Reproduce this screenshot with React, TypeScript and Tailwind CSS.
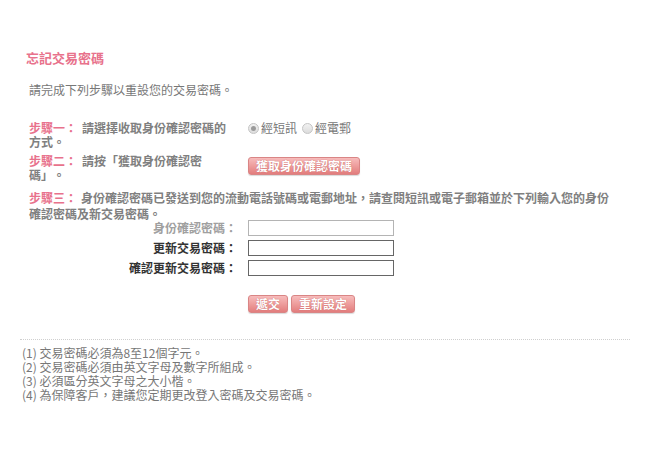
import type { ReactNode } from "react";

function Radio({ checked, label }: { checked?: boolean; label: string }) {
  return (
    <span className="flex items-center">
      <span className="flex h-[11px] w-[11px] items-center justify-center rounded-full border border-[#c4c4c4] bg-linear-to-b from-[#f2f2f2] to-[#dcdcdc]">
        {checked && <span className="h-[5px] w-[5px] rounded-full bg-[#9a9a9a]" />}
      </span>
      <span className="ml-[2px] text-[12px] leading-[14px] text-[#777]">{label}</span>
    </span>
  );
}

function PinkButton({ children }: { children: ReactNode }) {
  return (
    <button
      type="button"
      className="h-[18px] rounded-[3px] border border-[#d98585] bg-linear-to-b from-[#f7bcbc] to-[#e27d7d] px-[7px] text-[12px] font-bold leading-[16px] text-white shadow-[0_1px_1px_rgba(0,0,0,0.15)] [text-shadow:0_0_1px_#b9575a]"
    >
      {children}
    </button>
  );
}

const notes = [
  "(1) 交易密碼必須為8至12個字元。",
  "(2) 交易密碼必須由英文字母及數字所組成。",
  "(3) 必須區分英文字母之大小楷。",
  "(4) 為保障客戶，建議您定期更改登入密碼及交易密碼。",
];

export default function App() {
  return (
    <div
      lang="zh-Hant"
      className="min-h-[462px] w-[650px] bg-white pt-[50px] font-['Noto_Sans_CJK_TC',sans-serif] [text-spacing-trim:space-all]"
    >
      <div className="pl-[26px]">
        <h1 className="h-[16px] text-[13px] font-bold leading-[16px] text-[#e8728c]">忘記交易密碼</h1>

        <div className="pl-[3px]">
          <p className="mt-[17px] h-[14px] text-[12px] leading-[14px] text-[#777]">
            請完成下列步驟以重設您的交易密碼。
          </p>

          {/* step one */}
          <div className="mt-[24px] flex h-[28px]">
            <p className="w-[204px] text-[12px] font-bold leading-[14px] text-[#808080]">
              <span className="text-[#e8728c]">步驟一：</span>
              <span className="ml-[5px]">請選擇收取身份確認密碼的方式。</span>
            </p>
            <div className="ml-[15px] flex h-[14px] items-center gap-[5px]">
              <Radio checked label="經短訊" />
              <Radio label="經電郵" />
            </div>
          </div>

          {/* step two */}
          <div className="mt-[5px] flex h-[28px]">
            <p className="w-[204px] text-[12px] font-bold leading-[14px] text-[#808080]">
              <span className="text-[#e8728c]">步驟二：</span>
              <span className="ml-[5px]">請按「獲取身份確認密碼」。</span>
            </p>
            <div className="ml-[15px] mt-[-2px]">
              <PinkButton>獲取身份確認密碼</PinkButton>
            </div>
          </div>

          {/* step three */}
          <p className="mt-[8px] h-[32px] w-[586px] text-[12px] font-bold leading-[16px] text-[#808080]">
            <span className="text-[#e8728c]">步驟三：</span>
            <span className="ml-[4px]">
              身份確認密碼已發送到您的流動電話號碼或電郵地址，請查閱短訊或電子郵箱並於下列輸入您的身份確認密碼及新交易密碼。
            </span>
          </p>

          <div className="mt-[-2px] flex flex-col gap-[4px]">
            {[
              { label: "身份確認密碼：", dim: true },
              { label: "更新交易密碼：", dim: false },
              { label: "確認更新交易密碼：", dim: false },
            ].map((row) => (
              <div key={row.label} className="flex h-[16px] items-center">
                <span
                  className={
                    row.dim
                      ? "w-[208px] text-right text-[12px] font-bold leading-[16px] text-[#a0a0a0]"
                      : "w-[208px] text-right text-[12px] font-bold leading-[16px] text-[#333]"
                  }
                >
                  {row.label}
                </span>
                <input
                  type="password"
                  className={
                    row.dim
                      ? "ml-[11px] h-[16px] w-[146px] border border-[#b4b4b4] bg-white outline-none"
                      : "ml-[11px] h-[16px] w-[146px] border border-[#666] bg-white outline-none"
                  }
                />
              </div>
            ))}
          </div>

          <div className="mt-[19px] flex gap-[3px] pl-[219px]">
            <PinkButton>遞交</PinkButton>
            <PinkButton>重新設定</PinkButton>
          </div>
        </div>
      </div>

      <div className="px-[20px]">
        <div className="mt-[26px] border-t border-dotted border-[#cfcfcf]" />
        <ul className="mt-[6px] pl-[2px] text-[12px] leading-[14px] text-[#777]">
          {notes.map((n) => (
            <li key={n}>{n}</li>
          ))}
        </ul>
      </div>
    </div>
  );
}
